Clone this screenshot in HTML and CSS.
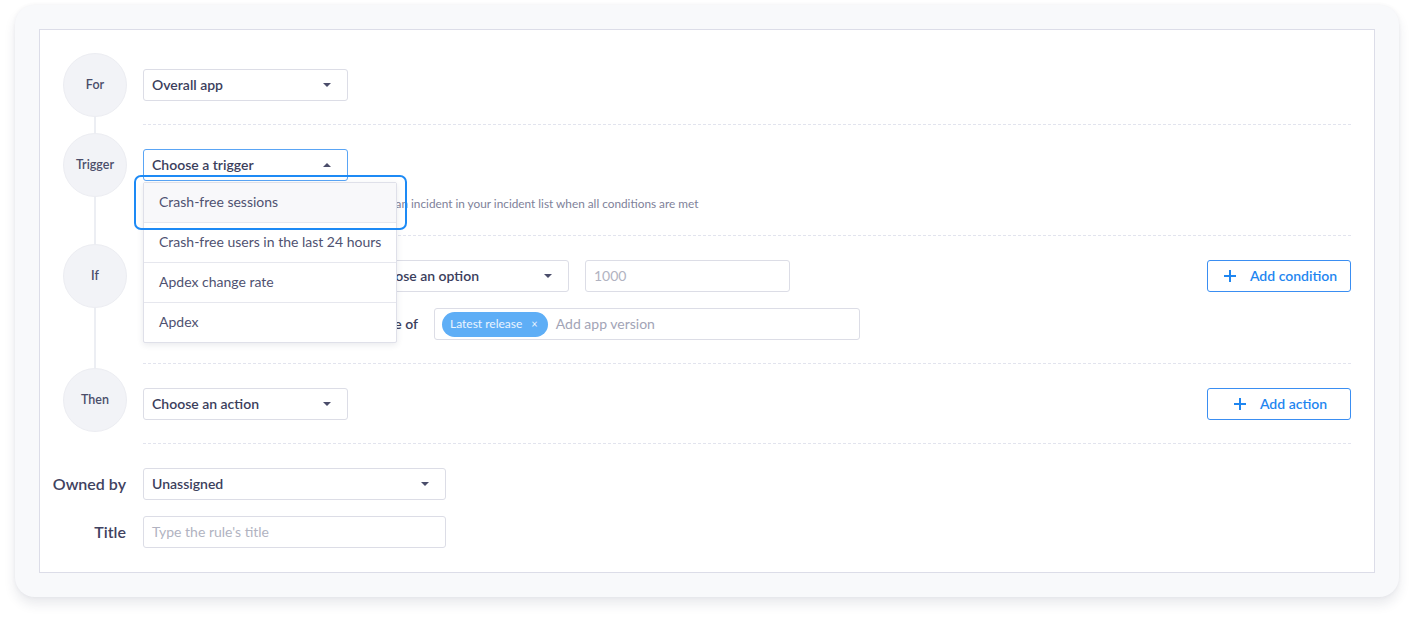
FILE: index.html
```html
<!DOCTYPE html>
<html lang="en">
<head>
<meta charset="utf-8">
<title>Rule</title>
<link rel="stylesheet" href="styles.css">
</head>
<body>
<div class="card">
  <div class="panel">
    <div class="step step-first">
      <div class="rail"><div class="circle">For</div></div>
      <div class="content">
        <div class="line">
          <div class="select w204"><span>Overall app</span><i class="caret"></i></div>
        </div>
      </div>
    </div>

    <div class="step">
      <div class="rail"><div class="circle">Trigger</div></div>
      <div class="content">
        <div class="line">
          <div class="trigger-wrap">
            <div class="select w204 active"><span>Choose a trigger</span><i class="caret up"></i></div>
            <div class="menu">
              <div class="menu-item hover">Crash-free sessions</div>
              <div class="menu-item">Crash-free users in the last 24 hours</div>
              <div class="menu-item">Apdex change rate</div>
              <div class="menu-item">Apdex</div>
            </div>
            <div class="highlight"></div>
          </div>
        </div>
        <p class="help">Once triggered this rule will automatically create an incident in your incident list when all conditions are met</p>
      </div>
    </div>

    <div class="step">
      <div class="rail"><div class="circle">If</div></div>
      <div class="content">
        <div class="line">
          <div class="select w212"><span>Crash-free sessions</span><i class="caret"></i></div>
          <div class="select w200"><span>Choose an option</span><i class="caret"></i></div>
          <div class="input w206"><span class="ph">1000</span></div>
          <div class="spacer"></div>
          <div class="btn">
            <svg width="14" height="14" viewBox="0 0 14 14"><path d="M7 1v12M1 7h12" stroke="#1f86f0" stroke-width="2" fill="none"/></svg>
            <span>Add condition</span>
          </div>
        </div>
        <div class="line line2">
          <div class="cond-label">In app versions that are one of</div>
          <div class="input w426">
            <span class="chip">Latest release <span class="x">×</span></span>
            <span class="ph dark">Add app version</span>
          </div>
        </div>
      </div>
    </div>

    <div class="step step-last">
      <div class="rail"><div class="circle then">Then</div></div>
      <div class="content">
        <div class="line">
          <div class="select w204"><span>Choose an action</span><i class="caret"></i></div>
          <div class="spacer"></div>
          <div class="btn btn-action">
            <svg width="14" height="14" viewBox="0 0 14 14"><path d="M7 1v12M1 7h12" stroke="#1f86f0" stroke-width="2" fill="none"/></svg>
            <span>Add action</span>
          </div>
        </div>
      </div>
    </div>

    <div class="field field-owner">
      <label class="field-label">Owned by</label>
      <div class="select w302"><span>Unassigned</span><i class="caret"></i></div>
    </div>
    <div class="field">
      <label class="field-label">Title</label>
      <div class="input w302"><span class="ph">Type the rule's title</span></div>
    </div>
  </div>
</div>
</body>
</html>
```

FILE: styles.css
```css
* { box-sizing: border-box; }
html, body { margin: 0; padding: 0; background: #ffffff; }
body {
  font-family: Lato, "Liberation Sans", sans-serif;
  color: #3b3e5c;
  width: 1414px;
  height: 622px;
  overflow: hidden;
}
.card {
  margin: 5px 0 0 15px;
  width: 1384px;
  height: 592px;
  padding: 24px;
  background: #f8f9fb;
  border-radius: 20px;
  box-shadow: 0 7px 12px rgba(40, 45, 80, 0.10), 0 0 4px rgba(40, 45, 80, 0.05);
}
.panel {
  background: #ffffff;
  border: 1px solid #dcdde8;
  width: 1336px;
  height: 544px;
  padding: 23px 23px 23px 0;
}
.step {
  display: grid;
  grid-template-columns: 103px 1fr;
}
.rail {
  position: relative;
  padding: 8px 0 0 23px;
}
.rail::before {
  content: "";
  position: absolute;
  left: 54px;
  width: 2px;
  top: 0;
  bottom: 0;
  background: #eceef3;
}
.step-first .rail { padding-top: 0; }
.step-first .rail::before { top: 32px; }
.step-last .rail { padding-top: 4px; }
.step-last .rail::before { bottom: auto; height: 36px; }
.circle {
  position: relative;
  width: 64px;
  height: 64px;
  border-radius: 50%;
  background: #f2f3f7;
  border: 1px solid #ecedf2;
  display: flex;
  align-items: center;
  justify-content: center;
  padding-bottom: 2px;
  font-size: 12.5px;
  font-weight: 600;
  color: #4a4d6a;
}
.content {
  padding: 24px 0 23px;
  border-bottom: 1px dashed #e2e4ee;
}
.step-first .content { padding-top: 16px; }
.line {
  display: flex;
  align-items: center;
  gap: 16px;
}
.line2 { margin-top: 16px; gap: 16px; }
.spacer { flex: 1; }
.select, .input {
  height: 32px;
  border: 1px solid #dcdde6;
  border-radius: 3px;
  background: #fff;
  display: flex;
  align-items: center;
  padding: 0 16px 2px 8px;
  font-size: 14px;
  font-weight: 600;
  color: #3b3e5c;
}
.select .caret { margin-top: 2px; }
.select { justify-content: space-between; }
.select.active { border-color: #5aa5f5; }
.w204 { width: 205px; }
.w212 { width: 202px; }
.w200 { width: 208px; }
.w206 { width: 205px; }
.w426 { width: 426px; padding-left: 7px; padding-bottom: 0; }
.w302 { width: 303px; }
.caret {
  width: 0; height: 0;
  border-left: 4px solid transparent;
  border-right: 4px solid transparent;
  border-top: 4px solid #4a4d6a;
}
.caret.up { border-top: none; border-bottom: 4px solid #4a4d6a; }
.ph { color: #b1b3c1; font-weight: 400; }
.ph.dark { color: #a2a4b6; margin-left: 8px; margin-bottom: 2px; }
.chip {
  display: inline-flex;
  align-items: center;
  height: 25px;
  padding: 0 10px 1px 8px;
  border-radius: 13px;
  background: #5eaef6;
  color: #eaf4ff;
  font-size: 12px;
  font-weight: 400;
}
.chip .x { margin-left: 9px; font-size: 11px; }
.cond-label {
  width: 275px;
  text-align: right;
  white-space: nowrap;
  font-size: 14px;
  font-weight: 600;
  color: #3b3e5c;
  padding-bottom: 2px;
}
.trigger-wrap { position: relative; }
.menu {
  position: absolute;
  top: 33px;
  left: 0;
  width: 254px;
  background: #fff;
  border: 1px solid #dfe0e9;
  border-radius: 2px;
  box-shadow: 0 2px 6px rgba(40, 45, 80, 0.10);
  z-index: 5;
}
.menu-item {
  height: 40px;
  display: flex;
  align-items: center;
  padding: 0 0 2px 15px;
  font-size: 14px;
  color: #4f5271;
  border-top: 1px solid #e6e7ee;
}
.menu-item:first-child { border-top: none; height: 39px; }
.menu-item.hover { background: #f8f8fa; }
.highlight {
  position: absolute;
  left: -9px;
  top: 26px;
  width: 273px;
  height: 55px;
  border: 2px solid #1d8af5;
  border-radius: 7px;
  z-index: 6;
}
.help {
  margin: 15px 0 0;
  line-height: 16px;
  font-size: 11.8px;
  color: #7e8199;
  white-space: nowrap;
}
.btn {
  width: 144px;
  height: 32px;
  border: 1px solid #3a8ef2;
  border-radius: 3px;
  display: flex;
  align-items: center;
  justify-content: center;
  gap: 13px;
  padding: 0 0 2px 2px;
  color: #1f86f0;
  font-size: 14px;
  font-weight: 600;
}
.btn svg { margin-top: 2px; }
.field {
  display: grid;
  grid-template-columns: 103px 1fr;
  align-items: center;
  margin-top: 16px;
}
.field-owner { margin-top: 24px; }
.field-label {
  text-align: right;
  padding: 0 17px 2px 0;
  font-size: 16px;
  font-weight: 600;
  color: #3f4260;
}
```
